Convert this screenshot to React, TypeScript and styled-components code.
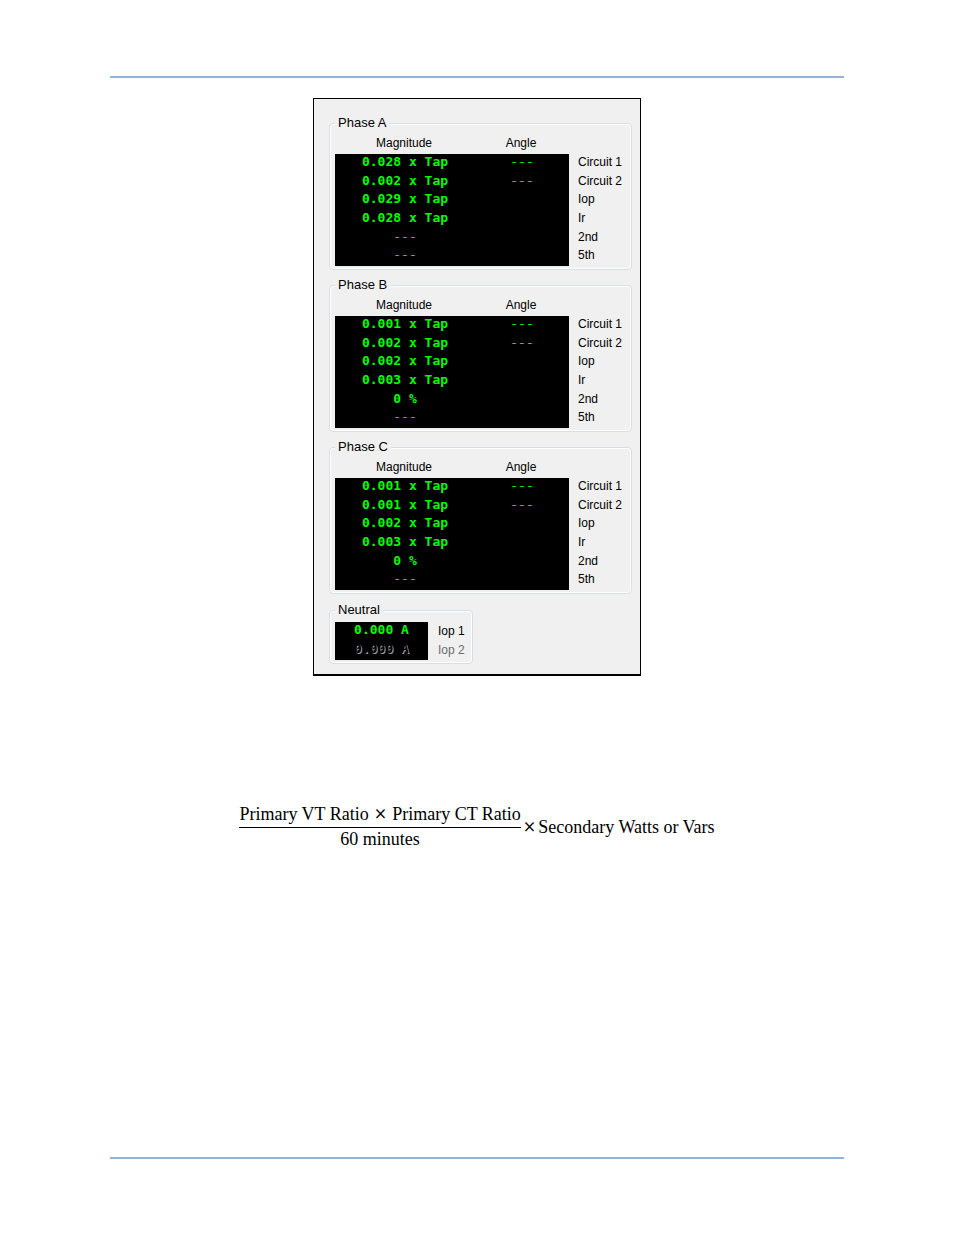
import React from "react";
import styled, { createGlobalStyle } from "styled-components";

const GlobalStyle = createGlobalStyle`
    * {
        box-sizing: border-box;
    }

    body {
        margin: 0;
        background: #ffffff;
        color: #000000;
        font-family: "Liberation Sans", Arial, sans-serif;
    }
`

const Page = styled.main`
    display: flex;
    flex-direction: column;
    min-height: 100vh;
    padding: 76px 110px;
`

const Rule = styled.hr`
    width: 100%;
    height: 2px;
    margin: 0;
    border: none;
    background: #95b3d7;
`

const FooterRule = styled(Rule)`
    margin-top: auto;
`

const Panel = styled.section`
    display: flex;
    flex-direction: column;
    align-items: flex-start;
    gap: 7px;
    align-self: center;
    margin-top: 20px;
    padding: 16px 8px 10px 15px;
    border: 1px solid #000000;
    border-bottom-width: 2px;
    background: #f0f0f0;
`

const Group = styled.fieldset`
    margin: 0;
    padding: 0 4px 3px 5px;
    border: 1px solid #d5dfe5;
    border-radius: 4px;
    box-shadow: inset 0 0 0 1px #ffffff;

    legend {
        padding: 0 3px;
        background: #f0f0f0;
        font-size: 13px;
        line-height: 16px;
    }
`

const NeutralGroup = styled(Group)`
    margin-top: 1px;
    padding-top: 4px;
`

const Readings = styled.table`
    border-collapse: collapse;
    table-layout: fixed;
    font-size: 12px;

    th, td {
        padding: 0;
        font-weight: 400;
    }

    tbody tr {
        height: 19px;
    }
`

const PhaseReadings = styled(Readings)`
    thead tr {
        height: 23px;
    }

    thead th {
        padding-right: 2px;
    }

    tbody tr:nth-child(3n + 2) {
        height: 18px;
    }
`

const Column = styled.col<{ $width: number }>`
    width: ${props => props.$width}px;
`

interface ValueProps {
    $disabled?: boolean;
}

const Value = styled.td<ValueProps>`
    background: #000000;
    color: ${props => props.$disabled ? "#000000" : "#00ff00"};
    text-shadow: ${props => props.$disabled ? "1px 1px 0 #a0a0a0" : "none"};
    text-align: center;
    vertical-align: top;
    white-space: pre;
    line-height: 16px;
    font-family: "DejaVu Sans Mono", monospace;
    font-size: 13px;

    b {
        font-weight: 700;
    }
`

const RowLabel = styled.th<ValueProps>`
    && {
        padding-left: 9px;
    }

    color: ${props => props.$disabled ? "#6d6d6d" : "#000000"};
    text-align: left;
    vertical-align: top;
    white-space: nowrap;
    line-height: 16px;
`

const NeutralLabel = styled(RowLabel)`
    && {
        padding-left: 10px;
    }

    line-height: 19px;
`

const Formula = styled.div`
    display: flex;
    align-items: center;
    align-self: center;
    gap: 2px;
    margin-top: 127px;
    font-family: "Liberation Serif", "Times New Roman", serif;
    font-size: 18px;
    line-height: 22px;
    white-space: nowrap;
`

const Fraction = styled.div`
    display: flex;
    flex-direction: column;
`

const Numerator = styled.div`
    display: flex;
    justify-content: center;
    gap: 5px;
    padding-bottom: 2px;
    border-bottom: 1px solid #000000;
`

const Denominator = styled.div`
    text-align: center;
`

const Times = styled.span`
    font-family: "DejaVu Serif", serif;
    font-size: 16px;
`

interface Phase {
    name: string;
    magnitudes: string[];
}

const EMPTY = "---"

const labels = ["Circuit 1", "Circuit 2", "Iop", "Ir", "2nd", "5th"]

const phases: Phase[] = [
    { name: "Phase A", magnitudes: ["0.028 x Tap", "0.002 x Tap", "0.029 x Tap", "0.028 x Tap", EMPTY, EMPTY] },
    { name: "Phase B", magnitudes: ["0.001 x Tap", "0.002 x Tap", "0.002 x Tap", "0.003 x Tap", "0 %", EMPTY] },
    { name: "Phase C", magnitudes: ["0.001 x Tap", "0.001 x Tap", "0.002 x Tap", "0.003 x Tap", "0 %", EMPTY] },
]

const PhaseGroup = ({ name, magnitudes }: Phase) => (
    <Group>
        <legend>{name}</legend>
        <PhaseReadings>
            <colgroup>
                <Column $width={140} />
                <Column $width={94} />
                <Column $width={58} />
            </colgroup>
            <thead>
                <tr>
                    <th scope="col">Magnitude</th>
                    <th scope="col">Angle</th>
                    <td />
                </tr>
            </thead>
            <tbody>
                {labels.map((label, index) => (
                    <tr key={label}>
                        <Value>{magnitudes[index] === EMPTY ? EMPTY : <b>{magnitudes[index]}</b>}</Value>
                        <Value>{index < 2 ? EMPTY : ""}</Value>
                        <RowLabel scope="row">{label}</RowLabel>
                    </tr>
                ))}
            </tbody>
        </PhaseReadings>
    </Group>
)

export default function App() {
    return (
        <>
            <GlobalStyle />
            <Page>
                <Rule />
                <Panel>
                    {phases.map(phase => <PhaseGroup key={phase.name} {...phase} />)}
                    <NeutralGroup>
                        <legend>Neutral</legend>
                        <Readings>
                            <colgroup>
                                <Column $width={93} />
                                <Column $width={40} />
                            </colgroup>
                            <tbody>
                                <tr>
                                    <Value><b>0.000 A</b></Value>
                                    <NeutralLabel scope="row">Iop 1</NeutralLabel>
                                </tr>
                                <tr>
                                    <Value $disabled><b>0.000 A</b></Value>
                                    <NeutralLabel scope="row" $disabled>Iop 2</NeutralLabel>
                                </tr>
                            </tbody>
                        </Readings>
                    </NeutralGroup>
                </Panel>
                <Formula>
                    <Fraction>
                        <Numerator>
                            <span>Primary VT Ratio</span>
                            <Times>×</Times>
                            <span>Primary CT Ratio</span>
                        </Numerator>
                        <Denominator>60 minutes</Denominator>
                    </Fraction>
                    <Times>×</Times>
                    <span>Secondary Watts or Vars</span>
                </Formula>
                <FooterRule />
            </Page>
        </>
    )
}
